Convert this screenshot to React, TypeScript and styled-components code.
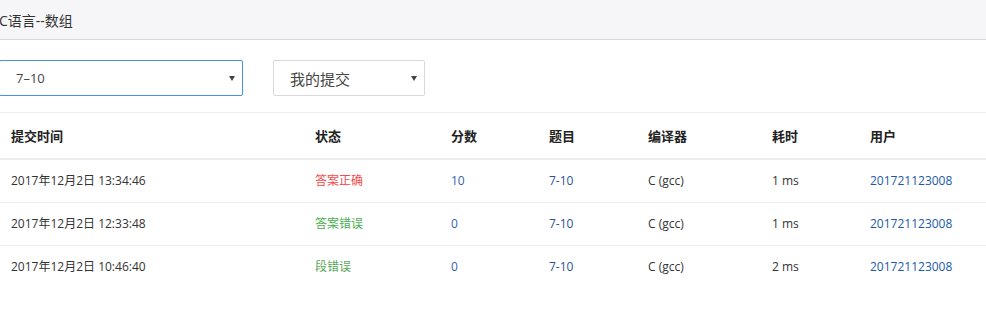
import React from "react";
import styled, { createGlobalStyle } from "styled-components";

const GlobalStyle = createGlobalStyle`
  body {
    margin: 0;
    background: #fff;
    font-family: "Open Sans", "Noto Sans CJK SC", sans-serif;
    color: #333;
  }
`;

const TitleBar = styled.div`
  height: 39px;
  background: #f6f6f8;
  border-bottom: 1px solid #d9d9d9;
  display: flex;
  align-items: center;
  font-size: 14px;
  color: #333;
  margin-left: -1px;
`;

const Filters = styled.div`
  display: flex;
  gap: 30px;
  padding: 20px 0 16px 0;
`;

const Select = styled.div<{ $width: number; $focused?: boolean }>`
  box-sizing: border-box;
  width: ${(p) => p.$width}px;
  height: 36px;
  margin-left: ${(p) => (p.$focused ? "-1px" : "0")};
  border: 1px solid ${(p) => (p.$focused ? "#4a90e2" : "#d9d9d9")};
  border-radius: 2px;
  display: flex;
  align-items: center;
  justify-content: space-between;
  padding: 0 6px 0 16px;
  font-size: ${(p) => (p.$focused ? "13px" : "15px")};
  color: #444;
`;

const Caret = styled.span`
  width: 0;
  height: 0;
  border-left: 3px solid transparent;
  border-right: 3px solid transparent;
  border-top: 5px solid #444;
  margin-right: 1px;
`;

const Table = styled.div`
  border-top: 1px solid #eee;
`;

const Row = styled.div<{ $head?: boolean }>`
  display: grid;
  grid-template-columns: 304px 136px 98px 99px 124px 98px 1fr;
  height: ${(p) => (p.$head ? "45px" : "42px")};
  align-items: center;
  border-bottom: ${(p) => (p.$head ? "2px solid #ececec" : "1px solid #eee")};
  font-size: ${(p) => (p.$head ? "13px" : "12px")};
  font-weight: ${(p) => (p.$head ? 700 : 400)};
  color: ${(p) => (p.$head ? "#222" : "#333")};
  &:last-child {
    border-bottom: none;
  }
`;

const Cell = styled.div<{ $color?: string }>`
  padding-left: 11px;
  white-space: nowrap;
  line-height: 16px;
  color: ${(p) => p.$color || "inherit"};
`;

const heads = ["提交时间", "状态", "分数", "题目", "编译器", "耗时", "用户"];

const rows = [
  { time: "2017年12月2日 13:34:46", status: "答案正确", color: "#f44a4a", score: "10", cost: "1 ms" },
  { time: "2017年12月2日 12:33:48", status: "答案错误", color: "#4caf50", score: "0", cost: "1 ms" },
  { time: "2017年12月2日 10:46:40", status: "段错误", color: "#5aa85a", score: "0", cost: "2 ms" },
];

export default function App() {
  return (
    <>
      <GlobalStyle />
      <TitleBar>C语言--数组</TitleBar>
      <Filters>
        <Select $width={244} $focused>
          7–10
          <Caret />
        </Select>
        <Select $width={152}>
          我的提交
          <Caret />
        </Select>
      </Filters>
      <Table>
        <Row $head>
          {heads.map((h) => (
            <Cell key={h}>{h}</Cell>
          ))}
        </Row>
        {rows.map((r) => (
          <Row key={r.time}>
            <Cell>{r.time}</Cell>
            <Cell $color={r.color}>{r.status}</Cell>
            <Cell $color="#3560a8">{r.score}</Cell>
            <Cell $color="#2d5196">7-10</Cell>
            <Cell>C (gcc)</Cell>
            <Cell>{r.cost}</Cell>
            <Cell $color="#1a5aa8">201721123008</Cell>
          </Row>
        ))}
      </Table>
    </>
  );
}
